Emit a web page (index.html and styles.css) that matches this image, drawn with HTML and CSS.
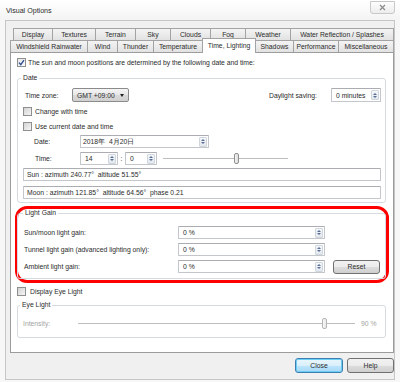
FILE: index.html
```html
<!DOCTYPE html>
<html lang="en">
<head>
    <meta charset="UTF-8">
    <meta name="viewport" content="width=device-width, initial-scale=1.0">
    <title>Visual Options</title>
    <link rel="stylesheet" href="styles.css">
</head>
<body>
    <div class="window">
        <div class="titlebar">
            <span class="title">Visual Options</span>
            <span class="close-x">
                <svg width="7" height="7" viewBox="0 0 7 7"><path d="M1 1 L6 6 M6 1 L1 6" stroke="#8a8a8a" stroke-width="1.2" fill="none"/></svg>
            </span>
        </div>
        <div class="client">
            <div class="tabs">
                <div class="tab-row back">
                    <span class="tab tab-display">Display</span>
                    <span class="tab tab-textures">Textures</span>
                    <span class="tab tab-terrain">Terrain</span>
                    <span class="tab tab-sky">Sky</span>
                    <span class="tab tab-clouds">Clouds</span>
                    <span class="tab tab-fog">Fog</span>
                    <span class="tab tab-weather">Weather</span>
                    <span class="tab tab-water">Water Reflection / Splashes</span>
                </div>
                <div class="tab-row front">
                    <span class="tab tab-windshield">Windshield Rainwater</span>
                    <span class="tab tab-wind">Wind</span>
                    <span class="tab tab-thunder">Thunder</span>
                    <span class="tab tab-temperature">Temperature</span>
                    <span class="tab tab-time active">Time, Lighting</span>
                    <span class="tab tab-shadows">Shadows</span>
                    <span class="tab tab-performance">Performance</span>
                    <span class="tab tab-misc">Miscellaneous</span>
                </div>
            </div>

            <div class="panel">
                <label class="check-row">
                    <span class="checkbox checked">
                        <svg width="7" height="7" viewBox="0 0 7 7"><path d="M1 3.6 L2.8 5.6 L6 1.2" stroke="#2c4f93" stroke-width="1.4" fill="none"/></svg>
                    </span>
                    The sun and moon positions are determined by the following date and time:
                </label>

                <fieldset class="group date-group">
                    <legend>Date</legend>
                    <div class="row tz-row">
                        <span class="tz-label">Time zone:</span>
                        <span class="combo">GMT +09:00 <span class="combo-arrow"></span></span>
                        <span class="daylight">Daylight saving:</span>
                        <span class="spinner minutes">0 minutes<span class="spin"></span></span>
                    </div>
                    <label class="check-row sub">
                        <span class="checkbox"></span>
                        Change with time
                    </label>
                    <label class="check-row sub second">
                        <span class="checkbox"></span>
                        Use current date and time
                    </label>
                    <div class="row date-row">
                        <span class="field-label">Date:</span>
                        <span class="spinner date-field">2018年&nbsp;&nbsp;4月20日<span class="spin"></span></span>
                    </div>
                    <div class="row time-row">
                        <span class="field-label">Time:</span>
                        <span class="spinner hour">14<span class="spin"></span></span>
                        <span class="colon">:</span>
                        <span class="spinner minute">0<span class="spin"></span></span>
                        <span class="slider time-slider"><span class="thumb"></span></span>
                    </div>
                    <div class="readout sun">Sun&nbsp;: azimuth 240.77°&nbsp;&nbsp;altitude 51.55°</div>
                    <div class="readout moon">Moon : azimuth 121.85°&nbsp;&nbsp;altitude 64.56°&nbsp;&nbsp;phase 0.21</div>
                </fieldset>

                <div class="highlight">
                    <fieldset class="group gain-group">
                        <legend>Light Gain</legend>
                        <div class="gain-grid">
                            <span>Sun/moon light gain:</span>
                            <span class="spinner gain">0 %<span class="spin"></span></span>
                            <span></span>
                            <span>Tunnel light gain (advanced lighting only):</span>
                            <span class="spinner gain">0 %<span class="spin"></span></span>
                            <span></span>
                            <span>Ambient light gain:</span>
                            <span class="spinner gain">0 %<span class="spin"></span></span>
                            <button class="btn reset">Reset</button>
                        </div>
                    </fieldset>
                </div>

                <label class="check-row eye-check">
                    <span class="checkbox"></span>
                    Display Eye Light
                </label>

                <fieldset class="group eye-group">
                    <legend>Eye Light</legend>
                    <div class="row intensity-row">
                        <span class="field-label muted">Intensity:</span>
                        <span class="slider eye-slider"><span class="thumb"></span></span>
                        <span class="muted percent">90 %</span>
                    </div>
                </fieldset>
            </div>

            <div class="footer">
                <button class="btn default close-btn">Close</button>
                <button class="btn help-btn">Help</button>
            </div>
        </div>
    </div>
</body>
</html>
```

FILE: styles.css
```css
* {
    box-sizing: border-box;
}
body {
    margin: 0;
    font-family: "Liberation Sans", Arial, sans-serif;
    font-size: 6.8px;
    color: #2b2b2b;
    background: #f7f7f7;
}
.window {
    width: 400px;
    height: 382px;
    display: flex;
    flex-direction: column;
}
.titlebar {
    height: 20px;
    display: flex;
    justify-content: space-between;
    align-items: flex-start;
    padding: 0 5px 0 6px;
    background: linear-gradient(#ffffff, #f4f4f4);
}
.title {
    margin-top: 7px;
    line-height: 8px;
    font-size: 7.1px;
    color: #2b2b2b;
}
.close-x {
    width: 25px;
    height: 13px;
    margin-top: 1px;
    border: 1px solid #c8c8c8;
    border-radius: 0 0 3px 3px;
    background: linear-gradient(#fdfdfd, #ededed);
    display: flex;
    align-items: center;
    justify-content: center;
}
.client {
    height: 360px;
    margin: 0 5px;
    border: 1px solid #c6c6c6;
    background: #f0f0f0;
    padding: 7px 0 0 4px;
}

/* tabs */
.tab-row {
    display: flex;
    height: 12px;
}
.tab-row.back {
    padding-left: 3px;
}
.tab-row.front {
    align-items: flex-end;
}
.tab {
    flex: none;
    height: 12px;
    margin-right: -1px;
    border: 1px solid #a3a3a3;
    border-bottom: none;
    background: linear-gradient(#f4f4f4, #e2e2e2);
    text-align: center;
    line-height: 11px;
    white-space: nowrap;
}
.tab.active {
    height: 15px;
    margin-bottom: -1px;
    background: #fff;
    position: relative;
    z-index: 2;
    line-height: 13px;
}
.tab-display { width: 40px; }
.tab-textures { width: 44px; }
.tab-terrain { width: 41px; }
.tab-sky { width: 36px; }
.tab-clouds { width: 41px; }
.tab-fog { width: 36px; }
.tab-weather { width: 46px; }
.tab-water { width: 104px; }
.tab-windshield { width: 78px; }
.tab-wind { width: 31px; }
.tab-thunder { width: 37px; }
.tab-temperature { width: 50px; }
.tab-time { width: 54px; }
.tab-shadows { width: 39px; }
.tab-performance { width: 46px; }
.tab-misc { width: 56px; }

.panel {
    height: 301px;
    border: 1px solid #9c9c9c;
    background: #fff;
    padding: 4px 7px 0 6px;
}

/* checkboxes */
.check-row {
    display: flex;
    align-items: center;
    gap: 2px;
    height: 10px;
}
.checkbox {
    width: 9px;
    height: 9px;
    flex: none;
    border: 1px solid #8e8f8f;
    background: linear-gradient(135deg, #d3d3d3, #f6f6f6);
    display: flex;
    align-items: center;
    justify-content: center;
}
.checkbox.checked {
    background: linear-gradient(135deg, #e6e6e6, #fbfbfb);
}

/* group boxes */
.group {
    margin: 0;
    min-width: 0;
    border: 1px solid #d5dbe0;
    border-radius: 3px;
}
.group legend {
    padding: 0 2px;
    line-height: 8px;
}
.date-group {
    margin-top: 7px;
    padding: 6px 4px 3px 7px;
}
.date-group legend {
    margin-left: -4px;
}
.row {
    display: flex;
    align-items: center;
}
.tz-row {
    height: 14px;
}
.tz-label {
    width: 47px;
}
.combo {
    width: 57px;
    height: 14px;
    border: 1px solid #8b8b8b;
    border-radius: 2px;
    background: linear-gradient(#f5f5f5, #e6e6e6 50%, #dadada 51%, #d0d0d0);
    display: flex;
    align-items: center;
    justify-content: space-between;
    padding: 0 4px 0 4px;
}
.combo-arrow {
    border-left: 2.5px solid transparent;
    border-right: 2.5px solid transparent;
    border-top: 3px solid #222;
}
.daylight {
    margin-left: auto;
    margin-right: 14px;
}
.spinner {
    height: 13px;
    border: 1px solid #c3c6cb;
    border-top-color: #abadb3;
    background: #fff;
    display: flex;
    align-items: center;
    justify-content: space-between;
    padding: 0 1px 0 4px;
    border-radius: 1px;
}
.spin {
    width: 8px;
    height: 10px;
    border: 1px solid #d0d6de;
    border-radius: 1px;
    background: linear-gradient(#f5f7f9, #e3e8ee);
    display: flex;
    flex-direction: column;
    align-items: center;
    justify-content: center;
    gap: 1px;
}
.spin::before,
.spin::after {
    content: "";
    border-left: 2px solid transparent;
    border-right: 2px solid transparent;
}
.spin::before {
    border-bottom: 2px solid #5a6e94;
}
.spin::after {
    border-top: 2px solid #5a6e94;
}
.minutes {
    width: 50px;
    height: 14px;
}
.check-row.sub {
    margin-top: 4px;
    margin-left: -2px;
    gap: 3px;
}
.check-row.sub.second {
    margin-top: 5px;
}
.field-label {
    width: 55px;
    padding-left: 9px;
}
.date-row {
    margin-top: 4px;
    height: 13px;
}
.date-field {
    width: 129px;
    padding-left: 2px;
}
.time-row {
    margin-top: 4px;
    height: 13px;
}
.time-row .field-label {
    padding-left: 10px;
}
.hour {
    width: 38px;
}
.colon {
    width: 7px;
    text-align: center;
}
.minute {
    width: 32px;
}
.slider {
    height: 12px;
    display: flex;
    align-items: center;
    background: linear-gradient(#bdbdbd, #bdbdbd) center / 100% 1px no-repeat;
}
.thumb {
    width: 5px;
    height: 11px;
    border: 1px solid #8f8f8f;
    border-radius: 2px;
    background: linear-gradient(90deg, #f4f4f4, #dcdcdc);
}
.time-slider {
    width: 125px;
    margin-left: 6px;
}
.time-slider .thumb {
    margin-left: 71px;
}
.readout {
    height: 13px;
    margin-left: -2px;
    border: 1px solid #c3c6cb;
    border-top-color: #abadb3;
    border-radius: 1px;
    padding-left: 3px;
    line-height: 11px;
}
.readout.sun {
    margin-top: 3px;
}
.readout.moon {
    margin-top: 5px;
}

/* light gain, with the red marker */
.highlight {
    margin: 3px -3px 0 -2px;
    border: 3px solid #ff0000;
    border-radius: 12px;
    padding-bottom: 1px;
}
.gain-group {
    margin-left: -1px;
    margin-right: 0;
    padding: 9px 4px 5px 6px;
}
.gain-group legend {
    margin-left: -1px;
}
.gain-grid {
    display: grid;
    grid-template-columns: 154px 147px 55px;
    grid-auto-rows: 13px;
    row-gap: 4px;
    align-items: center;
}
.gain {
    width: 147px;
}
.btn {
    font-family: "Liberation Sans", Arial, sans-serif;
    font-size: 6.8px;
    color: #2b2b2b;
    height: 15px;
    padding: 0;
    border: 1px solid #707070;
    border-radius: 3px;
    background: linear-gradient(#f2f2f2, #ebebeb 50%, #dddddd 51%, #cfcfcf);
}
.reset {
    width: 47px;
    height: 14px;
    margin-left: 8px;
}

/* eye light */
.eye-check {
    margin-top: 3px;
    gap: 4px;
}
.eye-group {
    margin-top: 5px;
    padding: 8px 4px 8px 5px;
}
.eye-group legend {
    margin-left: -3px;
}
.intensity-row {
    height: 12px;
}
.intensity-row .field-label {
    padding-left: 0;
}
.muted {
    color: #a3a3a3;
}
.eye-slider {
    width: 277px;
}
.eye-slider .thumb {
    margin-left: 244px;
    border-color: #b5b5b5;
    background: linear-gradient(90deg, #f8f8f8, #e8e8e8);
}
.percent {
    margin-left: 6px;
}

/* dialog buttons */
.footer {
    display: flex;
    justify-content: flex-end;
    gap: 4px;
    padding-top: 5px;
}
.close-btn {
    width: 48px;
    border-color: #3c7fb1;
    background: linear-gradient(#eaf6fd, #d9f0fc 50%, #bee6fd 51%, #a7d9f5);
    box-shadow: inset 0 0 0 1px #6ccdf5;
}
.help-btn {
    width: 47px;
}
```
